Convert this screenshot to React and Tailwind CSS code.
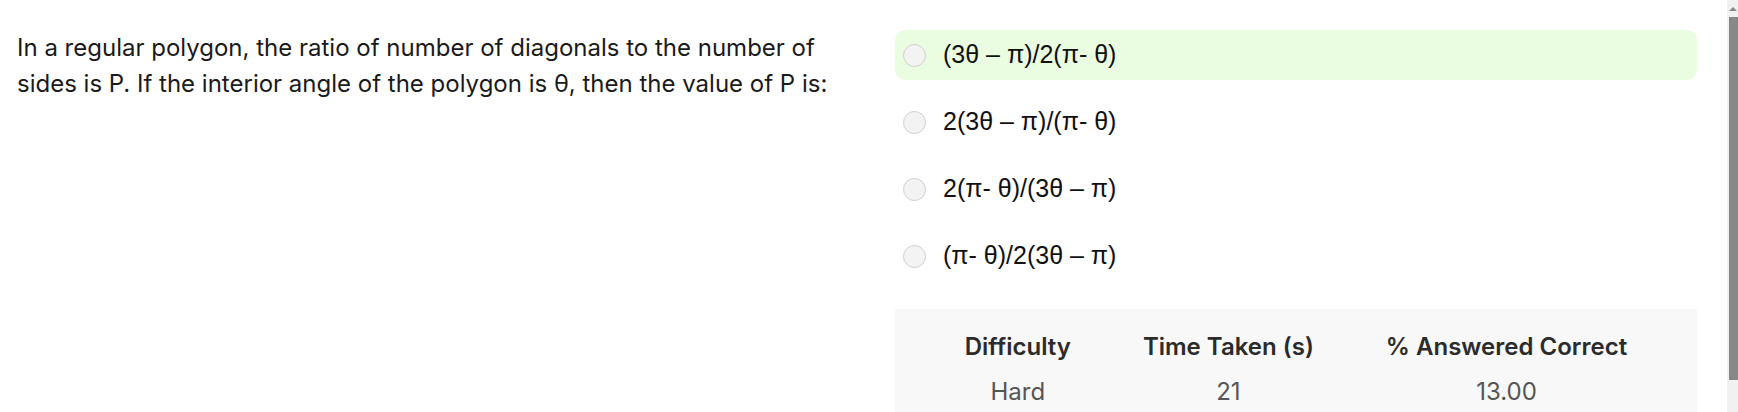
import React from "react";

const options = [
  "(3θ – π)/2(π- θ)",
  "2(3θ – π)/(π- θ)",
  "2(π- θ)/(3θ – π)",
  "(π- θ)/2(3θ – π)",
];

const stats = [
  { label: "Difficulty", value: "Hard" },
  { label: "Time Taken (s)", value: "21" },
  { label: "% Answered Correct", value: "13.00" },
];

export default function App() {
  const selected = 0;

  return (
    <div className="flex h-[412px] overflow-hidden bg-white">
      <div className="flex-1">
        <div className="flex pl-[17px] pt-[30px]">
          {/* Question */}
          <div className="w-[820px] shrink-0">
            <p className="font-['Inter',sans-serif] text-[24px] leading-[36px] text-[#1a1a1a]">
              In a regular polygon, the ratio of number of diagonals to the number of sides is P. If the interior angle of the polygon is θ, then the value of P is:
            </p>
          </div>

          {/* Options + stats */}
          <div className="ml-[58px] w-[802px] shrink-0">
            <div className="flex flex-col gap-[17px]">
              {options.map((opt, i) => (
                <label
                  key={i}
                  className={`flex h-[50px] items-center gap-[17px] rounded-[10px] pl-[8px] ${
                    i === selected ? "bg-[#ebfde0]" : ""
                  }`}
                >
                  <span className="h-[23px] w-[23px] shrink-0 rounded-full border border-[#cfcfcf] bg-[#f3f3f3]" />
                  <span className="font-['Liberation_Sans',Arial,sans-serif] text-[25px] text-[#111]">
                    {opt}
                  </span>
                </label>
              ))}
            </div>

            <div className="mt-[28px] bg-[#f8f8f8] pt-[23px] pb-[34px]">
              <div className="flex justify-center font-['Inter',sans-serif]">
                {stats.map((s) => (
                  <div key={s.label} className="flex flex-col items-center gap-[15px] px-[36px]">
                    <span className="text-[24px] leading-[30px] font-semibold text-[#2b2b2b]">
                      {s.label}
                    </span>
                    <span className="text-[24px] leading-[30px] text-[#555]">
                      {s.value}
                    </span>
                  </div>
                ))}
              </div>
            </div>
          </div>
        </div>
      </div>

      {/* scrollbar */}
      <div className="flex w-[11px] shrink-0 flex-col items-end bg-[#f1f1f1]">
        <div className="flex h-[17px] w-full items-center justify-center">
          <span className="h-0 w-0 border-x-[4px] border-b-[4px] border-x-transparent border-b-[#888]" />
        </div>
        <div className="h-[363px] w-[9px] bg-[#888]" />
      </div>
    </div>
  );
}
